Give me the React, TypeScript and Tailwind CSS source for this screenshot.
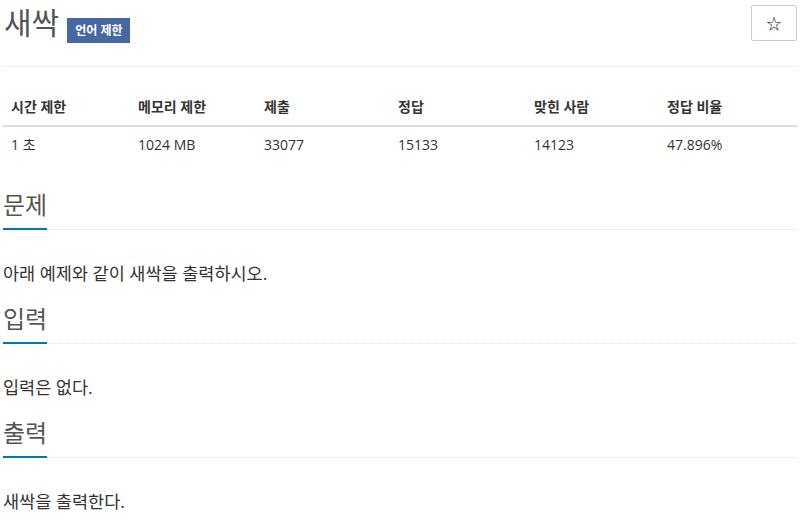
const font = { fontFamily: '"Open Sans", "Noto Sans CJK KR", sans-serif' }

const stats = [
  { label: "시간 제한", value: "1 초", w: "w-[127px]" },
  { label: "메모리 제한", value: "1024 MB", w: "w-[126px]" },
  { label: "제출", value: "33077", w: "w-[134px]" },
  { label: "정답", value: "15133", w: "w-[136px]" },
  { label: "맞힌 사람", value: "14123", w: "w-[133px]" },
  { label: "정답 비율", value: "47.896%", w: "" },
]

function Section({ title, children }: { title: string; children: React.ReactNode }) {
  return (
    <section>
      <h2 className="pb-[8px] text-[24px] leading-[30px] font-normal text-[#555]">{title}</h2>
      <div className="flex items-center">
        <div className="h-[2px] w-[44px] bg-[#0076c0]" />
        <div className="flex-1 border-t border-dotted border-[#dedede]" />
      </div>
      <p className="mt-[31px] text-[17.5px] leading-[24px] text-[#333]">{children}</p>
    </section>
  )
}

export default function App() {
  return (
    <div className="min-h-screen bg-white pl-[3px] pr-[4px]" style={font}>
      <header className="flex items-start justify-between border-b border-[#eee] pt-[5px] pb-[23px]">
        <div className="flex items-start">
          <h1 className="pl-[1px] text-[30px] leading-[36px] font-normal text-[#555]">새싹</h1>
          <span className="mt-[13px] ml-[8px] flex h-[25px] items-center bg-[#4567a3] px-[8px] text-[12px] font-bold text-white">
            언어 제한
          </span>
        </div>
        <button
          type="button"
          className="flex h-[36px] w-[46px] items-center justify-center rounded-[2px] border border-[#ccc] bg-white text-[15px] text-[#222]"
        >
          ☆
        </button>
      </header>

      <table className="mt-[22px] w-full border-collapse text-left text-[14px] leading-[20px] text-[#333]">
        <thead>
          <tr>
            {stats.map((s) => (
              <th key={s.label} className={`${s.w} border-b-2 border-[#ddd] px-[8px] py-[8px] font-bold`}>
                {s.label}
              </th>
            ))}
          </tr>
        </thead>
        <tbody>
          <tr>
            {stats.map((s) => (
              <td key={s.label} className="px-[8px] py-[8px]">
                {s.value}
              </td>
            ))}
          </tr>
        </tbody>
      </table>

      <div className="mt-[27px] flex flex-col gap-[19px]">
        <Section title="문제">아래 예제와 같이 새싹을 출력하시오.</Section>
        <Section title="입력">입력은 없다.</Section>
        <Section title="출력">새싹을 출력한다.</Section>
      </div>
    </div>
  )
}
